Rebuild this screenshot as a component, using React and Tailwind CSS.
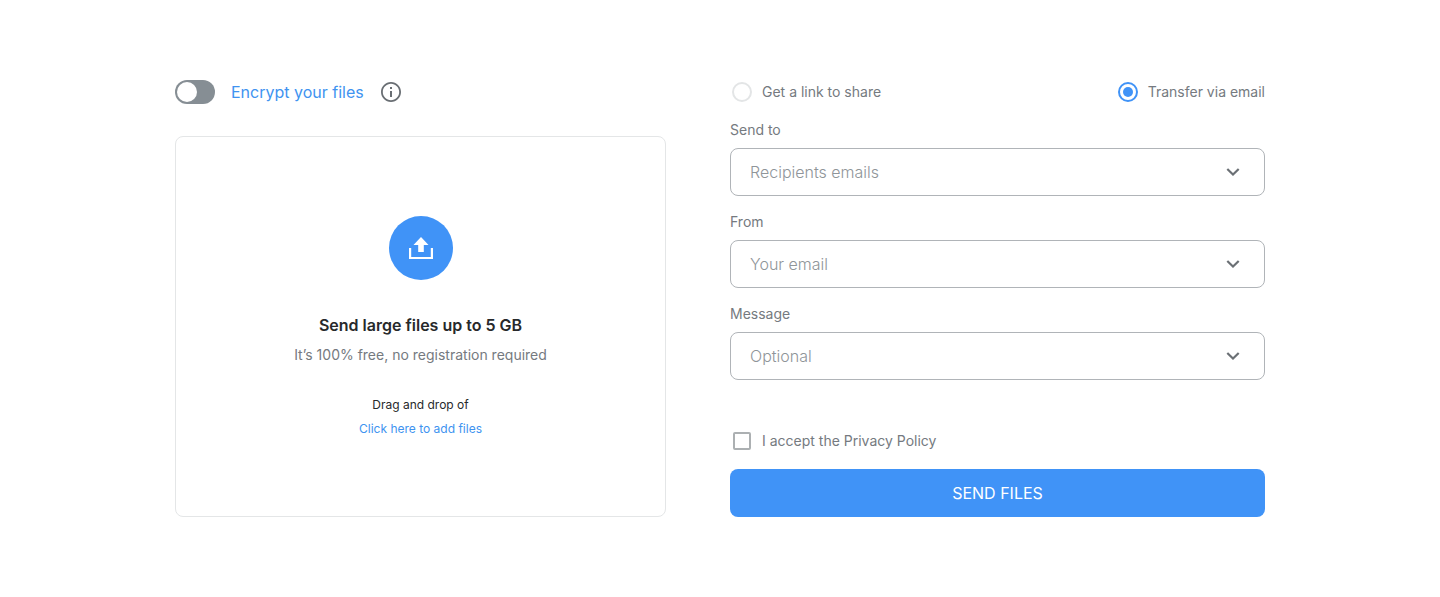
import React, { useState } from "react";

function InfoIcon() {
  return (
    <svg viewBox="0 0 24 24" className="size-6" fill="#696e73" aria-hidden="true">
      <path d="M11 7h2v2h-2zm0 4h2v6h-2zm1-9C6.48 2 2 6.48 2 12s4.480 10 10 10 10-4.480 10-10S17.520 2 12 2zm0 18.200c-4.530 0-8.200-3.670-8.200-8.200S7.470 3.800 12 3.800s8.200 3.670 8.200 8.200-3.670 8.200-8.200 8.200z" />
    </svg>
  );
}

function UploadIcon() {
  return (
    <svg viewBox="0 0 24 22" width="24" height="22" fill="#fff" aria-hidden="true">
      <path d="M12 0l7.500 8h-4.700v7H9.200V8H4.500z" />
      <path d="M0 11h2.200v8.900h19.600V11H24v11H0z" />
    </svg>
  );
}

function SelectField({ id, label, placeholder }) {
  return (
    <div className="flex flex-col gap-2">
      <label htmlFor={id} className="text-sm leading-5 text-[#757a80]">
        {label}
      </label>
      <div className="grid items-center">
        <select
          id={id}
          defaultValue=""
          className="col-start-1 row-start-1 h-12 w-full appearance-none rounded-lg border border-[#b0b4b8] bg-white pr-12 pl-[19px] text-base font-light text-[#8f9599]"
        >
          <option value="">{placeholder}</option>
        </select>
        <svg
          viewBox="0 0 14 8"
          width="14"
          height="8"
          className="pointer-events-none col-start-1 row-start-1 mr-[25px] justify-self-end"
          fill="none"
          stroke="#6b7075"
          strokeWidth="2.200"
          aria-hidden="true"
        >
          <path d="M1.300 1L7 6.500 12.700 1" />
        </svg>
      </div>
    </div>
  );
}

function Radio({ value, selected, onSelect, children }) {
  return (
    <label className="flex items-center gap-2.5 text-sm text-[#757a80]">
      <input
        type="radio"
        name="delivery"
        value={value}
        checked={selected === value}
        onChange={() => onSelect(value)}
        className="grid size-5 appearance-none place-items-center rounded-full border-2 border-[#e3e5e6] before:size-2.5 before:rounded-full checked:border-[#4093f7] checked:before:bg-[#4093f7]"
      />
      {children}
    </label>
  );
}

export default function App() {
  const [delivery, setDelivery] = useState("email");

  return (
    <main className="min-h-screen bg-white px-6 py-20 font-['Inter',sans-serif]">
      <div className="mx-auto grid max-w-[1090px] gap-16 md:grid-cols-[491fr_535fr]">
        <section className="flex flex-col gap-8">
          <div className="flex h-6 items-center">
            <label className="flex items-center gap-4 text-base text-[#4093f0]">
              <input
                type="checkbox"
                role="switch"
                className="flex h-6 w-10 appearance-none items-center rounded-full bg-[#868e94] px-0.5 before:size-5 before:rounded-full before:bg-white checked:justify-end checked:bg-[#4093f7]"
              />
              Encrypt your files
            </label>
            <button type="button" aria-label="About encryption" className="ml-[15px]">
              <InfoIcon />
            </button>
          </div>

          <div className="flex flex-1 flex-col items-center rounded-lg border border-[#e4e6e7] px-6 pt-[79px] pb-16 text-center">
            <div className="flex size-16 items-center justify-center rounded-full bg-[#4093f7]">
              <UploadIcon />
            </div>
            <h1 className="mt-[33px] text-base leading-6 font-semibold text-[#27292b]">
              Send large files up to 5 GB
            </h1>
            <p className="mt-2 text-sm leading-5 text-[#757a80]">
              It’s 100% free, no registration required
            </p>
            <p className="mt-7 text-xs leading-6 text-[#27292b]">Drag and drop of</p>
            <button type="button" className="text-xs leading-6 text-[#4093f0]">
              Click here to add files
            </button>
          </div>
        </section>

        <form className="flex flex-col" onSubmit={(event) => event.preventDefault()}>
          <div className="flex h-6 items-center justify-between pl-0.5">
            <Radio value="link" selected={delivery} onSelect={setDelivery}>
              Get a link to share
            </Radio>
            <Radio value="email" selected={delivery} onSelect={setDelivery}>
              Transfer via email
            </Radio>
          </div>

          <div className="mt-4 flex flex-col gap-4">
            <SelectField id="recipients" label="Send to" placeholder="Recipients emails" />
            <SelectField id="sender" label="From" placeholder="Your email" />
            <SelectField id="message" label="Message" placeholder="Optional" />
          </div>

          <label className="mt-[51px] flex items-center gap-[11px] pl-[3px] text-sm leading-5 text-[#757a80]">
            <input
              type="checkbox"
              className="size-[18px] appearance-none rounded-xs border-2 border-[#acb0b2] checked:border-[#4093f7] checked:bg-[#4093f7]"
            />
            I accept the Privacy Policy
          </label>

          <button
            type="submit"
            className="mt-[18px] h-12 rounded-lg bg-[#4093f7] text-base text-white"
          >
            SEND FILES
          </button>
        </form>
      </div>
    </main>
  );
}
